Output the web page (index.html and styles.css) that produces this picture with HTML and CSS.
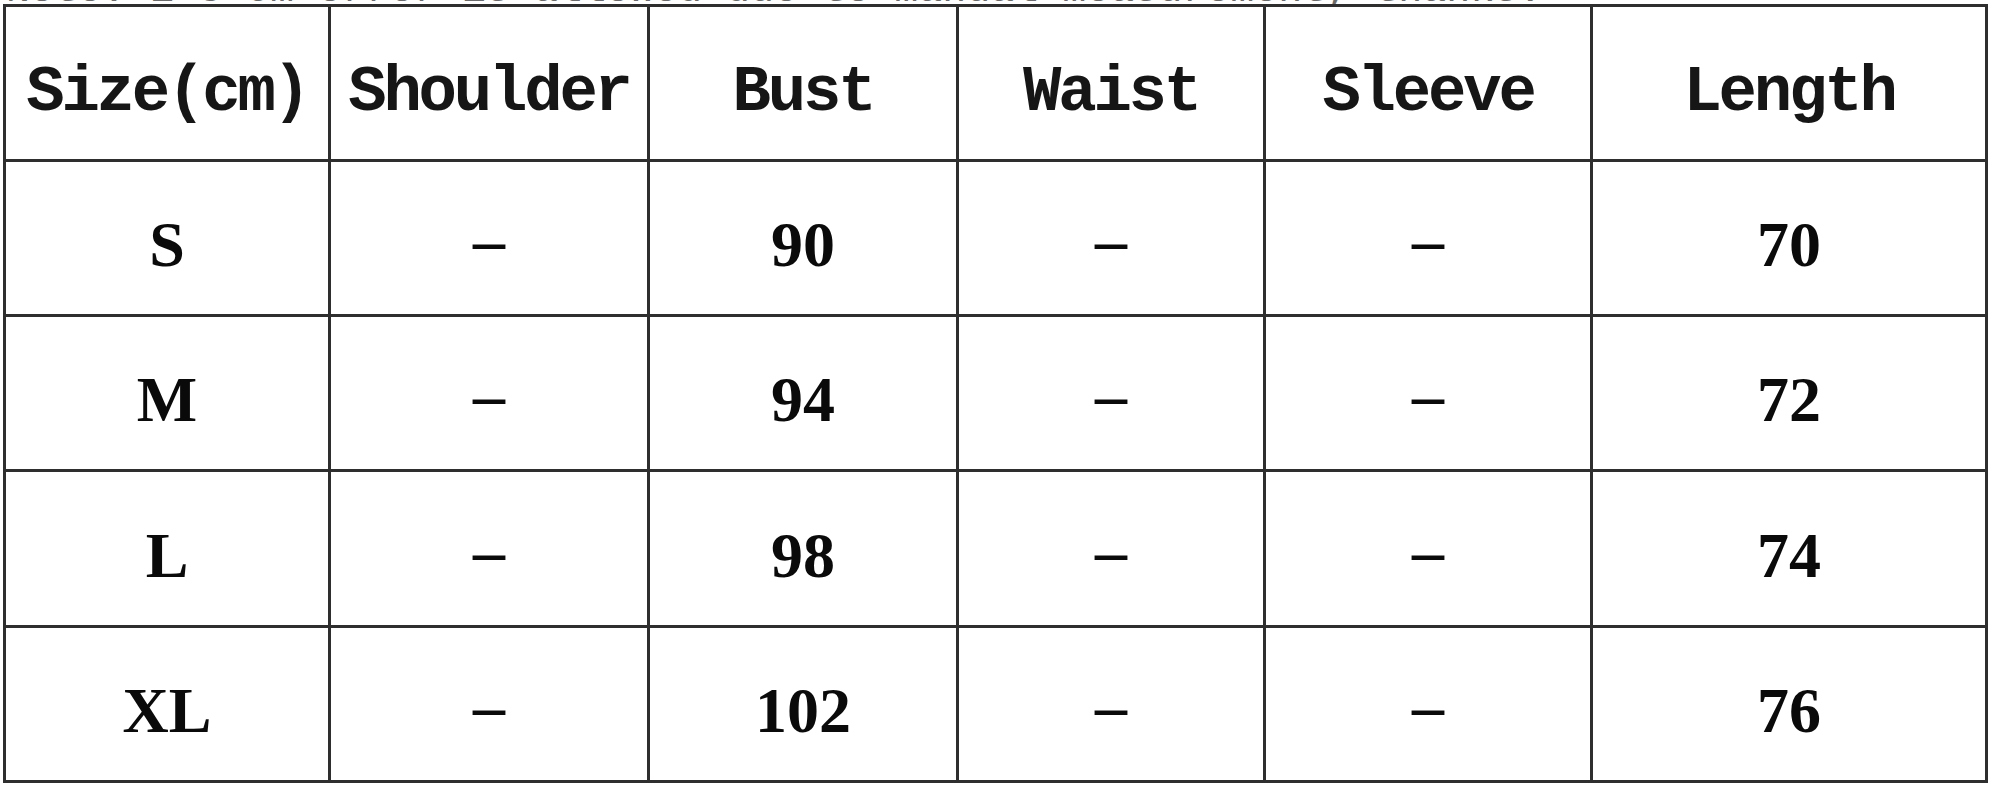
FILE: index.html
```html
<!DOCTYPE html>
<html lang="en">
<head>
<meta charset="utf-8">
<title>Size chart</title>
<link rel="stylesheet" href="styles.css">
</head>
<body>
<div class="note"><span>Note: 1-3 cm error is allowed due to manual measurement, thanks.</span></div>
<table class="chart">
  <colgroup>
    <col class="c1"><col class="c2"><col class="c3"><col class="c4"><col class="c5"><col class="c6">
  </colgroup>
  <thead>
    <tr class="r0">
      <th>Size(cm)</th><th>Shoulder</th><th>Bust</th><th>Waist</th><th>Sleeve</th><th>Length</th>
    </tr>
  </thead>
  <tbody>
    <tr class="r1"><td>S</td><td><span class="dash">–</span></td><td>90</td><td><span class="dash">–</span></td><td><span class="dash">–</span></td><td>70</td></tr>
    <tr class="r2"><td>M</td><td><span class="dash">–</span></td><td>94</td><td><span class="dash">–</span></td><td><span class="dash">–</span></td><td>72</td></tr>
    <tr class="r3"><td>L</td><td><span class="dash">–</span></td><td>98</td><td><span class="dash">–</span></td><td><span class="dash">–</span></td><td>74</td></tr>
    <tr class="r4"><td>XL</td><td><span class="dash">–</span></td><td>102</td><td><span class="dash">–</span></td><td><span class="dash">–</span></td><td>76</td></tr>
  </tbody>
</table>
</body>
</html>
```

FILE: styles.css
```css
html, body {
  margin: 0;
  padding: 0;
  background: #ffffff;
}

body {
  width: 2000px;
  height: 800px;
  overflow: hidden;
  color: #000;
}

.note {
  height: 4px;
  overflow: hidden;
  padding-left: 6px;
}

.note span {
  display: block;
  margin-top: -29px;
  font-family: "Liberation Mono", monospace;
  font-size: 40px;
  line-height: 40px;
  color: #6a6a6a;
  white-space: nowrap;
}

.chart {
  margin-left: 3px;
  border-collapse: collapse;
  table-layout: fixed;
  width: 1985px;
}

.c1 { width: 325px; }
.c2 { width: 319px; }
.c3 { width: 309px; }
.c4 { width: 307px; }
.c5 { width: 327px; }
.c6 { width: 395px; }

.chart th,
.chart td {
  border: 3px solid #2e2e2e;
  text-align: center;
  vertical-align: middle;
  padding: 0;
  white-space: nowrap;
}

.chart th {
  height: 132px;
  padding-top: 20px;
  font-family: "Liberation Mono", monospace;
  font-weight: bold;
  font-size: 64px;
  line-height: 64px;
  letter-spacing: -3.2px;
  color: #161616;
}

.chart td {
  height: 138px;
  padding-top: 14px;
  font-family: "Liberation Serif", serif;
  font-weight: bold;
  font-size: 64px;
  line-height: 64px;
  color: #0a0a0a;
}

.chart tr.r3 td { height: 139px; }

.dash {
  vertical-align: 8px;
}
```
